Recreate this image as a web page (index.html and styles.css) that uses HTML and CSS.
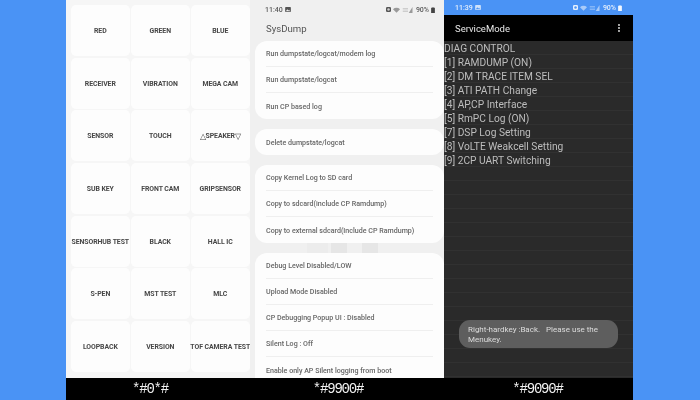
FILE: index.html
```html
<!DOCTYPE html>
<html lang="en">
<head>
<meta charset="utf-8">
<title>Samsung secret codes</title>
<link rel="stylesheet" href="styles.css">
</head>
<body>
<main class="frame">
  <div class="phones">
    <section class="phone tests">
      <div class="tile">RED</div><div class="tile">GREEN</div><div class="tile">BLUE</div>
      <div class="tile">RECEIVER</div><div class="tile">VIBRATION</div><div class="tile">MEGA CAM</div>
      <div class="tile">SENSOR</div><div class="tile">TOUCH</div><div class="tile"><span class="tri">△</span>SPEAKER<span class="tri">▽</span></div>
      <div class="tile">SUB KEY</div><div class="tile">FRONT CAM</div><div class="tile">GRIPSENSOR</div>
      <div class="tile">SENSORHUB TEST</div><div class="tile">BLACK</div><div class="tile">HALL IC</div>
      <div class="tile">S-PEN</div><div class="tile">MST TEST</div><div class="tile">MLC</div>
      <div class="tile">LOOPBACK</div><div class="tile">VERSION</div><div class="tile">TOF CAMERA TEST</div>
    </section>

    <section class="phone sysdump">
      <div class="status status-light">
        <span class="status-left">11:40
          <svg class="ico" viewBox="0 0 8 7" width="6" height="5"><rect width="8" height="7" rx="1" fill="#555"/><path d="M1 6l2-3 1.500 2 1-1 1.500 2z" fill="#eee"/></svg>
        </span>
        <span class="status-right">
          <svg class="ico" viewBox="0 0 8 8" width="5" height="5"><rect width="8" height="8" rx="2" fill="#555"/><circle cx="4" cy="4" r="2" fill="#ccc"/></svg>
          <svg class="ico" viewBox="0 0 10 8" width="7" height="6"><path d="M0 3a7 7 0 0 1 10 0L5 8z" fill="#999"/></svg>
          <svg class="ico" viewBox="0 0 14 8" width="12" height="6"><path d="M0 2h7v1H0zM0 5h7v1H0z" fill="#aaa"/><path d="M13 0v8H8z" fill="#999"/></svg>
          <span>90%</span>
          <svg class="ico" viewBox="0 0 5 8" width="4" height="6"><path d="M1 1h1V0h1v1h1a1 1 0 0 1 1 0v7H0V1z" fill="#444"/></svg>
        </span>
      </div>
      <h1 class="sys-title">SysDump</h1>
      <div class="card">
        <div class="row">Run dumpstate/logcat/modem log</div>
        <div class="row">Run dumpstate/logcat</div>
        <div class="row">Run CP based log</div>
      </div>
      <div class="card">
        <div class="row">Delete dumpstate/logcat</div>
      </div>
      <div class="card">
        <div class="row">Copy Kernel Log to SD card</div>
        <div class="row">Copy to sdcard(include CP Ramdump)</div>
        <div class="row">Copy to external sdcard(Include CP Ramdump)</div>
      </div>
      <div class="ghosts"><i class="ghost ghost-wide"></i><i class="ghost"></i><i class="ghost ghost-last"></i></div>
      <div class="card card-open">
        <div class="row">Debug Level Disabled/LOW</div>
        <div class="row">Upload Mode Disabled</div>
        <div class="row">CP Debugging Popup UI : Disabled</div>
        <div class="row">Silent Log : Off</div>
        <div class="row">Enable only AP Silent logging from boot</div>
      </div>
    </section>

    <section class="phone service">
      <div class="status status-blue">
        <span class="status-left">11:39
          <svg class="ico" viewBox="0 0 8 7" width="6" height="5"><rect width="8" height="7" rx="1" fill="#cfe2fb"/><path d="M1 6l2-3 1.500 2 1-1 1.500 2z" fill="#4a93f5"/></svg>
        </span>
        <span class="status-right">
          <svg class="ico" viewBox="0 0 8 8" width="5" height="5"><rect width="8" height="8" rx="2" fill="#e6f0fd"/><circle cx="4" cy="4" r="2" fill="#4a93f5"/></svg>
          <svg class="ico" viewBox="0 0 10 8" width="7" height="6"><path d="M0 3a7 7 0 0 1 10 0L5 8z" fill="#a9cbf9"/></svg>
          <svg class="ico" viewBox="0 0 14 8" width="12" height="6"><path d="M0 2h7v1H0zM0 5h7v1H0z" fill="#c0d9fb"/><path d="M13 0v8H8z" fill="#a9cbf9"/></svg>
          <span>90%</span>
          <svg class="ico" viewBox="0 0 5 8" width="4" height="6"><path d="M1 1h1V0h1v1h1a1 1 0 0 1 1 0v7H0V1z" fill="#f2f7fe"/></svg>
        </span>
      </div>
      <div class="toolbar">
        <span>ServiceMode</span>
        <svg class="kebab" viewBox="0 0 2 8" width="2" height="8"><circle cx="1" cy="1" r="0.900" fill="#eee"/><circle cx="1" cy="4" r="0.900" fill="#eee"/><circle cx="1" cy="7" r="0.900" fill="#eee"/></svg>
      </div>
      <div class="console">
        <div class="line">DIAG CONTROL</div>
        <div class="line">[1] RAMDUMP (ON)</div>
        <div class="line">[2] DM TRACE ITEM SEL</div>
        <div class="line">[3] ATI PATH Change</div>
        <div class="line">[4] AP,CP Interface</div>
        <div class="line">[5] RmPC Log (ON)</div>
        <div class="line">[7] DSP Log Setting</div>
        <div class="line">[8] VoLTE Weakcell Setting</div>
        <div class="line">[9] 2CP UART Switching</div>
        <div class="toast">Right-hardkey :Back. &nbsp; Please use the Menukey.</div>
      </div>
    </section>
  </div>
  <footer class="codes">
    <div class="code code-a">*#0*#</div>
    <div class="code code-b">*#9900#</div>
    <div class="code code-c">*#9090#</div>
  </footer>
</main>
</body>
</html>
```

FILE: styles.css
```css
* { box-sizing: border-box; }
html, body { margin: 0; height: 100%; }
body {
  background: #4a93f5;
  font-family: Roboto, "Liberation Sans", sans-serif;
  overflow: hidden;
}
.frame {
  width: 567px;
  height: 400px;
  margin-left: 66px;
  display: flex;
  flex-direction: column;
  filter: blur(0.35px);
}
.phones { display: flex; height: 378px; }
.phone { height: 378px; overflow: hidden; }

/* left: test grid */
.tests {
  width: 184px;
  background: #f6f6f6;
  padding: 5px 0 0 5px;
  display: grid;
  grid-template-columns: repeat(3, 58.600px);
  grid-auto-rows: 51px;
  column-gap: 1.400px;
  row-gap: 1.650px;
}
.tile {
  background: #fdfdfd;
  border-radius: 5px;
  padding-top: 1px;
  display: flex;
  align-items: center;
  justify-content: center;
  font-size: 6.900px;
  letter-spacing: -0.06px;
  font-weight: 700;
  color: #474747;
  white-space: nowrap;
}
.tri { font-weight: 400; font-size: 8px; }

/* status bars */
.status {
  display: flex;
  justify-content: space-between;
  align-items: center;
  font-size: 7px;
  font-weight: 500;
}
.status-left, .status-right { display: flex; align-items: center; gap: 2px; }
.ico { display: block; }
.status-light { height: 18px; padding: 1px 9px 0 10px; color: #5c5c5c; }
.status-blue { height: 15px; padding: 0 11px 0 11px; color: #e4effd; background: #4a93f5; }

/* middle: SysDump */
.sysdump {
  width: 194px;
  background: #f0f0f0;
  padding-left: 5px;
}
.sys-title {
  margin: 0;
  height: 23px;
  padding: 1px 0 0 11px;
  font-size: 9.600px;
  line-height: 20px;
  font-weight: 400;
  color: #555;
}
.card {
  background: #fdfdfd;
  border-radius: 12px;
  margin-bottom: 10px;
  padding: 0 11px;
}
.card-open { margin-bottom: 0; border-radius: 12px 12px 0 0; }
.row {
  height: 26px;
  display: flex;
  align-items: center;
  font-size: 7.100px;
  font-weight: 500;
  color: #666;
  white-space: nowrap;
  border-bottom: 1px solid #efefef;
}
.row:last-child { border-bottom: 0; }
.ghosts {
  height: 10px;
  margin-top: -10px;
  display: flex;
  padding-left: 52px;
}
.ghost { width: 16px; margin-right: 15px; background: #e6e6e6; }
.ghost-wide { width: 21px; margin-right: 3px; background: #ececec; }
.ghost-last { margin-right: 0; }

/* right: ServiceMode */
.service { width: 189px; background: #2a2a2a; }
.toolbar {
  height: 26px;
  background: #000;
  color: #e8e8e8;
  font-size: 9.500px;
  padding: 0 13px 0 11px;
  display: flex;
  justify-content: space-between;
  align-items: center;
}
.console {
  position: relative;
  height: 337px;
  padding-top: 0.5px;
  background: repeating-linear-gradient(#2a2a2a 0 13px, #313131 13px 14px);
}
.line {
  height: 14px;
  line-height: 14px;
  font-size: 10.200px;
  color: #bdbdbd;
  white-space: nowrap;
}
.toast {
  position: absolute;
  left: 15px;
  top: 279px;
  width: 159px;
  height: 28px;
  padding: 5px 9px;
  border-radius: 11px;
  background: #5e5e5e;
  color: #dcdcdc;
  font-size: 8px;
  line-height: 10px;
}

/* bottom bar */
.codes { height: 22px; background: #000; display: flex; }
.code {
  color: #f2f2f2;
  font-family: "Liberation Mono", monospace;
  font-weight: 400;
  font-size: 14px;
  letter-spacing: -1.200px;
  line-height: 23px;
  text-align: center;
}
.code-a { width: 168px; }
.code-b { width: 208px; }
.code-c { width: 191px; }
```
